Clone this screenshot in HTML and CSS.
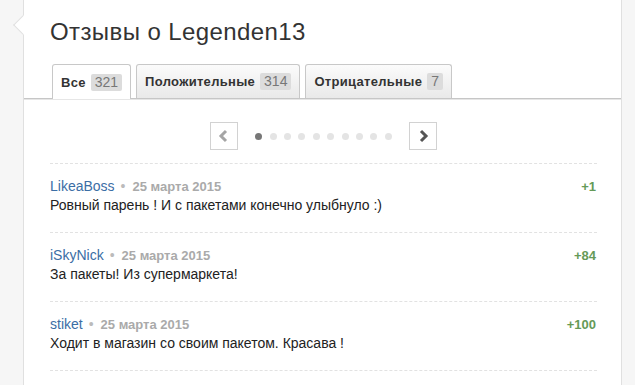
FILE: index.html
```html
<!DOCTYPE html>
<html lang="ru">
<head>
    <meta charset="UTF-8">
    <title>Отзывы о Legenden13</title>
    <link rel="stylesheet" href="styles.css">
</head>
<body>
    <div class="card">
        <span class="notch"></span>
        <h1 class="title">Отзывы о Legenden13</h1>

        <div class="tabs">
            <div class="tab active">Все <span class="count">321</span></div>
            <div class="tab">Положительные <span class="count">314</span></div>
            <div class="tab">Отрицательные <span class="count">7</span></div>
        </div>

        <div class="content">
            <div class="pager">
                <span class="pager-btn disabled">
                    <svg width="12" height="14" viewBox="0 0 12 14"><polyline points="8,2 3,7 8,12" fill="none" stroke="currentColor" stroke-width="3"/></svg>
                </span>
                <div class="dots">
                    <span class="dot current"></span>
                    <span class="dot"></span>
                    <span class="dot"></span>
                    <span class="dot"></span>
                    <span class="dot"></span>
                    <span class="dot"></span>
                    <span class="dot"></span>
                    <span class="dot"></span>
                    <span class="dot"></span>
                    <span class="dot"></span>
                </div>
                <span class="pager-btn">
                    <svg width="12" height="14" viewBox="0 0 12 14"><polyline points="4,2 9,7 4,12" fill="none" stroke="currentColor" stroke-width="3"/></svg>
                </span>
            </div>

            <div class="review">
                <div class="review-head">
                    <div><a class="author">LikeaBoss</a><span class="sep">•</span><span class="date">25 марта 2015</span></div>
                    <span class="score">+1</span>
                </div>
                <p class="review-text">Ровный парень ! И с пакетами конечно улыбнуло :)</p>
            </div>
            <div class="review">
                <div class="review-head">
                    <div><a class="author">iSkyNick</a><span class="sep">•</span><span class="date">25 марта 2015</span></div>
                    <span class="score">+84</span>
                </div>
                <p class="review-text">За пакеты! Из супермаркета!</p>
            </div>
            <div class="review">
                <div class="review-head">
                    <div><a class="author">stiket</a><span class="sep">•</span><span class="date">25 марта 2015</span></div>
                    <span class="score">+100</span>
                </div>
                <p class="review-text">Ходит в магазин со своим пакетом. Красава !</p>
            </div>
            <div class="review"></div>
        </div>
    </div>
</body>
</html>
```

FILE: styles.css
```css
body {
    margin: 0;
    background: #f6f6f6;
    font-family: 'Liberation Sans', Arial, sans-serif;
    color: #333;
}
.card {
    position: relative;
    margin-left: 23px;
    width: 597px;
    min-height: 100vh;
    background: #fff;
    border-left: 1px solid #e0e0e0;
    border-right: 1px solid #e0e0e0;
}
.notch {
    position: absolute;
    left: -8px;
    top: 18px;
    width: 13px;
    height: 13px;
    background: #fff;
    border-left: 1px solid #e0e0e0;
    border-bottom: 1px solid #e0e0e0;
    transform: rotate(45deg);
}
.title {
    margin: 0;
    padding: 18px 0 0 26px;
    font-size: 24px;
    letter-spacing: 0.4px;
    line-height: 28px;
    font-weight: normal;
    color: #333;
}
.tabs {
    display: flex;
    gap: 5px;
    margin-top: 18px;
    padding-left: 28px;
    border-bottom: 1px solid #c6c6c6;
    box-shadow: 0 1px 0 #e6e6e6;
}
.tab {
    display: flex;
    align-items: center;
    gap: 5px;
    height: 33px;
    padding: 0 8px;
    border: 1px solid #c8c8c8;
    border-bottom: none;
    border-radius: 3px 3px 0 0;
    background: linear-gradient(#fbfbfb, #e9e9e9);
    font-size: 13px;
    letter-spacing: 0.3px;
    font-weight: bold;
    color: #333;
}
.tab.active {
    background: #fff;
    margin-bottom: -1px;
    height: 34px;
}
.count {
    display: inline-block;
    padding: 0 4px;
    height: 17px;
    line-height: 17px;
    border-radius: 2px;
    background: #dcdcdc;
    font-size: 14px;
    letter-spacing: 0;
    font-weight: normal;
    color: #777;
}
.content {
    padding: 0 24px 0 26px;
}
.pager {
    display: flex;
    justify-content: center;
    align-items: center;
    margin-top: 23px;
    margin-bottom: 13px;
}
.pager-btn {
    display: flex;
    align-items: center;
    justify-content: center;
    width: 26px;
    height: 26px;
    border: 1px solid #d2d2d2;
    color: #555;
}
.pager-btn.disabled {
    color: #a5a5a5;
}
.dots {
    display: flex;
    gap: 7.4px;
    margin: 0 17.5px;
}
.dot {
    width: 7px;
    height: 7px;
    border-radius: 50%;
    background: #e4e4e4;
}
.dot.current {
    background: #777;
}
.review {
    border-top: 1px dashed #e2e2e2;
    padding: 13px 0 17px;
    font-size: 14px;
    line-height: 19px;
}
.review-head {
    display: flex;
    justify-content: space-between;
    align-items: baseline;
}
.author {
    color: #3b6ea5;
}
.sep {
    margin: 0 7px 0 6px;
    color: #bbb;
}
.date {
    font-size: 13px;
    font-weight: bold;
    color: #aaa;
}
.score {
    font-size: 13px;
    font-weight: bold;
    color: #659a57;
    padding-right: 1px;
}
.review-text {
    margin: 0;
    color: #222;
}
```
